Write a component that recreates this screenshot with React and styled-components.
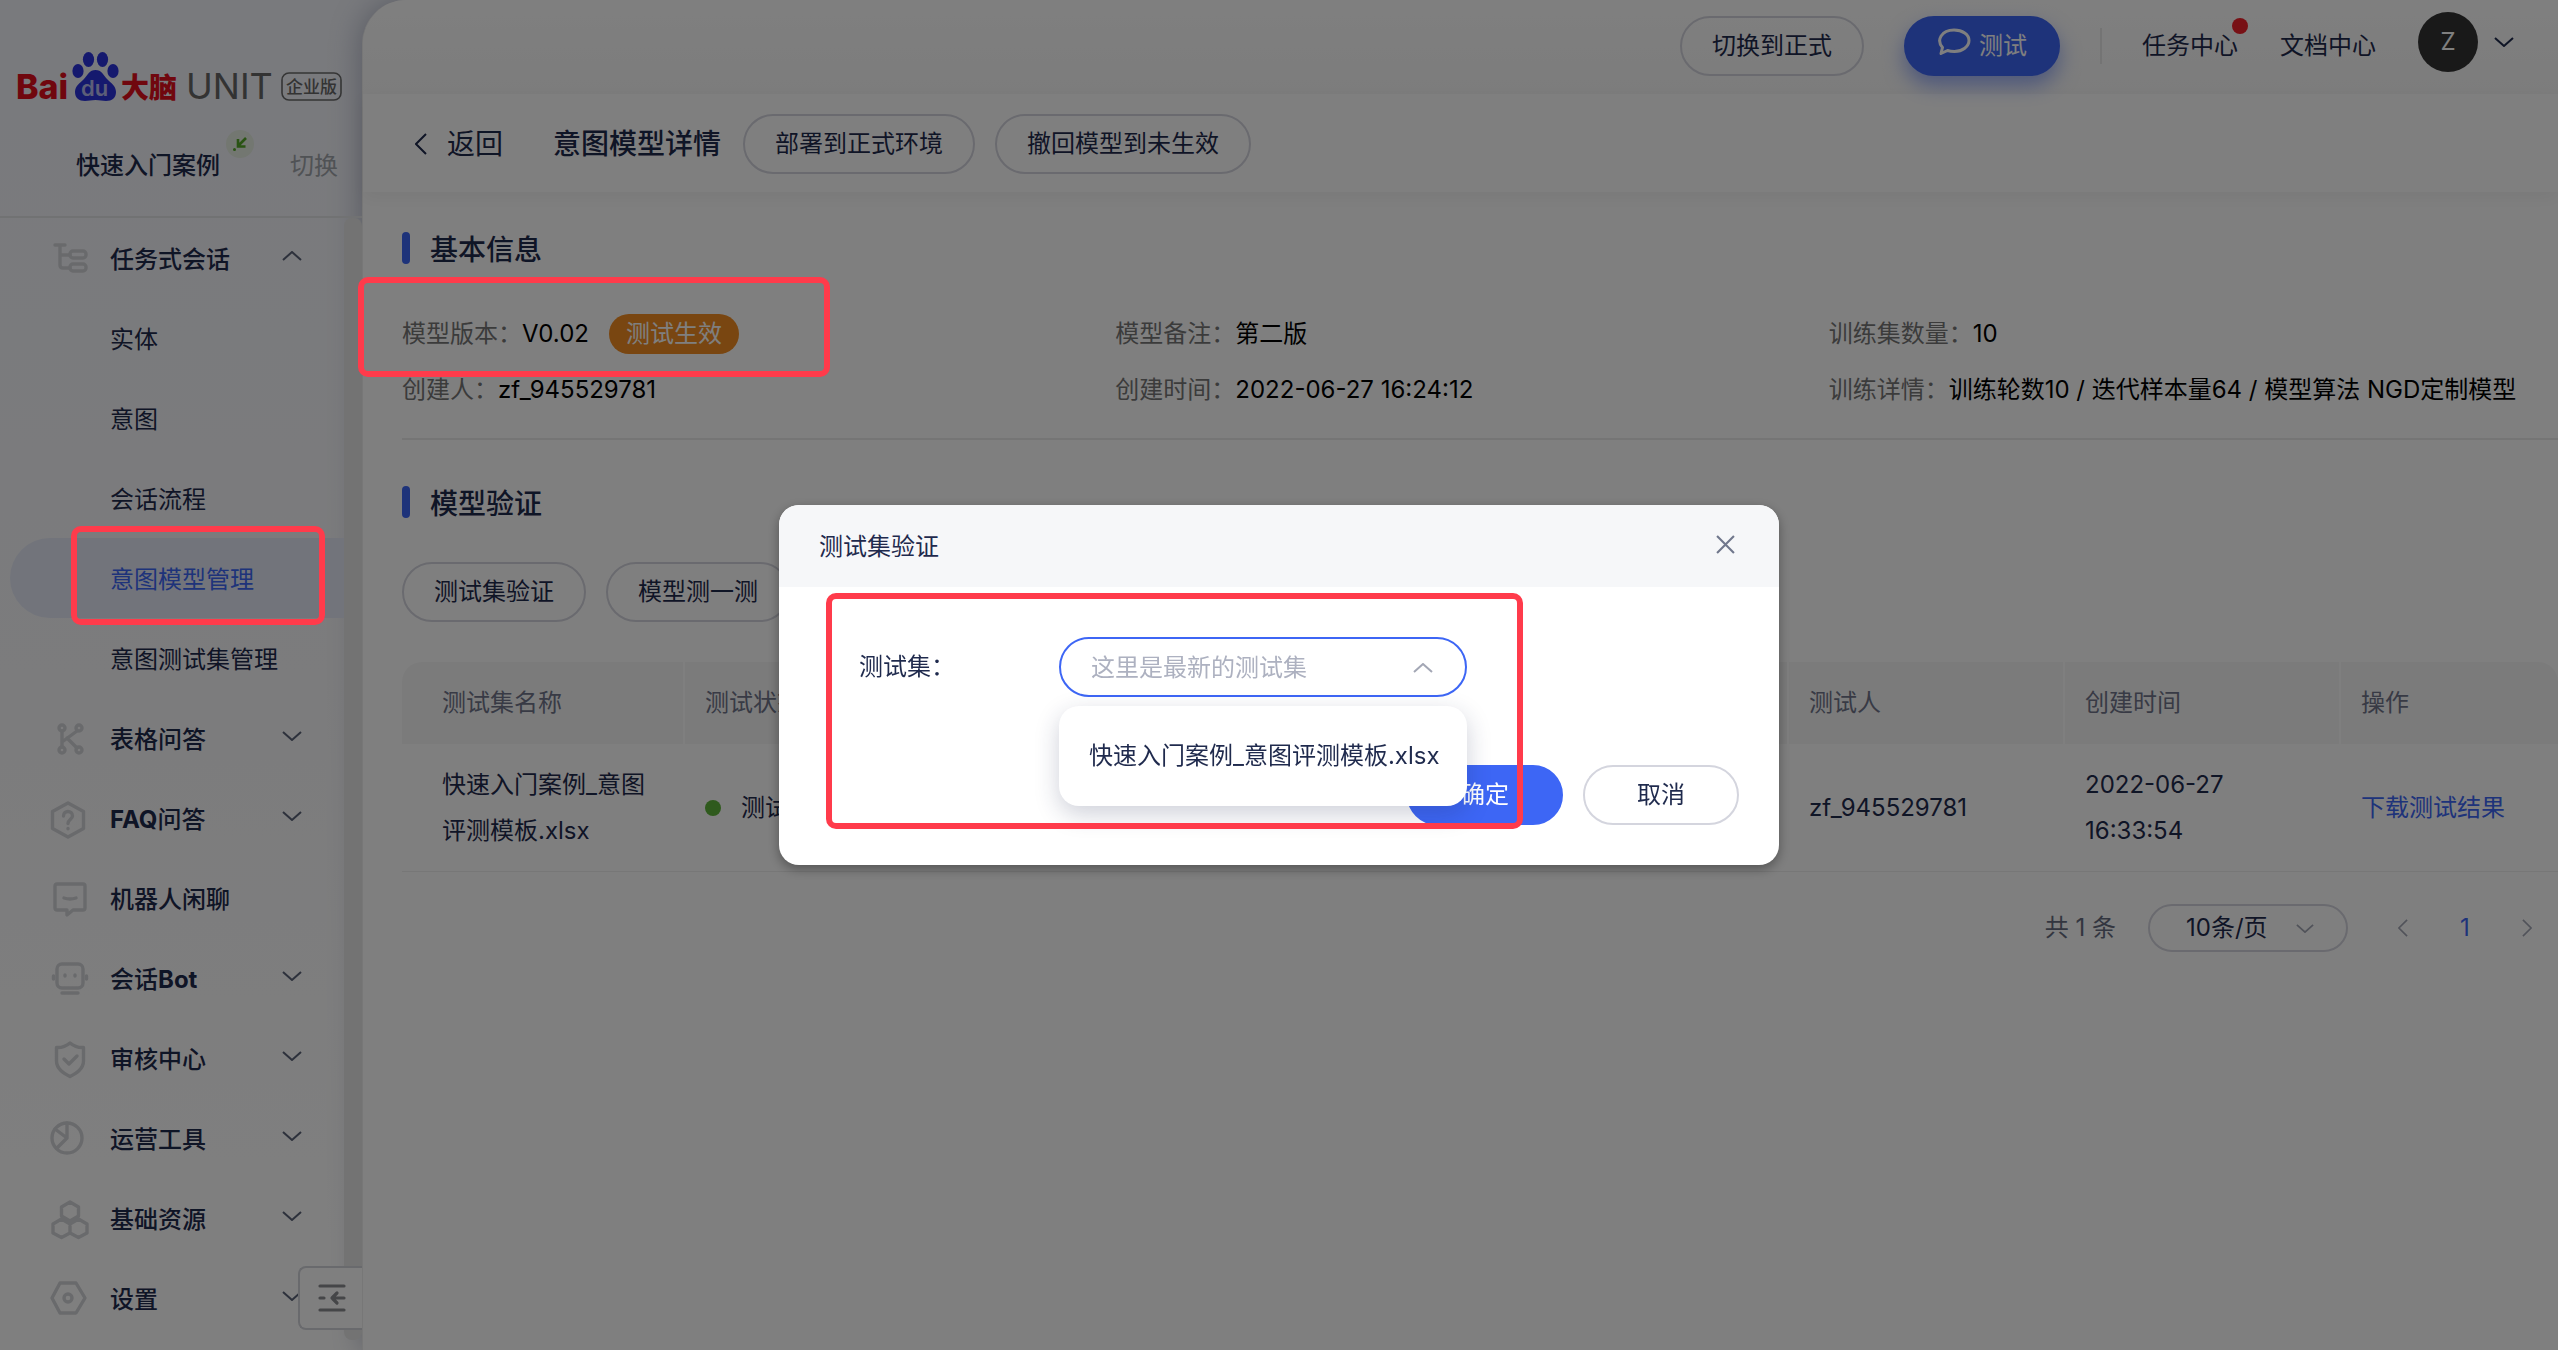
import React from 'react';
import styled, { createGlobalStyle, css } from 'styled-components';

const GlobalStyle = createGlobalStyle`
  * {
    box-sizing: border-box;
  }

  body {
    margin: 0;
    background: #fff;
    color: #1f2a4d;
    font-family: Inter, 'Noto Sans CJK SC', sans-serif;
    font-size: 24px;
    line-height: 36px;
  }

  button,
  select {
    font: inherit;
    color: inherit;
  }

  ul,
  h1,
  h2,
  dl,
  dd {
    margin: 0;
    padding: 0;
    font-weight: 400;
    list-style: none;
  }

  a {
    color: inherit;
    text-decoration: none;
  }
`;

const Page = styled.div`
  position: relative;
  display: flex;
  min-height: 100vh;
  overflow: hidden;
  background: linear-gradient(180deg, #f2f4fa 0%, #f8f8fa 50%, #fff 92%);
`;

/* ---------- sidebar ---------- */

const Sidebar = styled.aside`
  position: relative;
  flex: none;
  display: flex;
  flex-direction: column;
  width: 362px;
`;

const Brand = styled.div`
  display: flex;
  flex-direction: column;
  height: 218px;
  padding: 42px 24px 0 14px;
  border-bottom: 2px solid #e2e4e6;
`;

const ProjectRow = styled.div`
  display: flex;
  align-items: center;
  justify-content: space-between;
  margin-top: 36px;
  padding-left: 62px;
  height: 36px;
`;

const ProjectName = styled.span`
  position: relative;
  font-weight: 500;
`;

const ProjectBadge = styled.svg`
  position: absolute;
  left: 150px;
  top: -18px;
`;

const SwitchLink = styled.a`
  color: #a0a4aa;
`;

const MenuArea = styled.div`
  flex: 1;
  display: flex;
  min-height: 0;
`;

const Menu = styled.ul`
  flex: 1;
`;

const ScrollTrack = styled.div`
  flex: none;
  width: 18px;
  margin-bottom: 10px;
  border-radius: 8px;
  background: #e6e6e6;
`;

const MenuLink = styled.a`
  display: flex;
  align-items: center;
  height: 80px;
  padding: 4px 42px 0 50px;
  font-weight: 500;

  ${props => props.$sub && css`
    margin-left: 10px;
    padding: 4px 0 0 100px;
    border-radius: 40px 0 0 40px;
    font-weight: 400;
  `}

  ${props => props.$active && css`
    background: #e4e9f7;
    color: #3d66f5;
  `}
`;

const MenuIcon = styled.svg`
  flex: none;
  width: 40px;
  height: 40px;
  margin-right: 20px;
  fill: none;
  stroke: #d3d4d8;
  stroke-width: 3.4;
  stroke-linecap: round;
  stroke-linejoin: round;
`;

const Arrow = styled.svg`
  flex: none;
  width: ${props => props.$size || 20}px;
  height: ${props => (props.$size || 20) / 2}px;
  fill: none;
  stroke: ${props => props.$color || '#5b6378'};
  stroke-width: 2;
  transform: ${props => (props.$up ? 'rotate(180deg)' : 'none')};
`;

const MenuArrow = styled(Arrow)`
  margin-left: auto;
  margin-bottom: 8px;
`;

const Collapse = styled.button`
  position: absolute;
  right: 0;
  bottom: 20px;
  display: flex;
  align-items: center;
  width: 64px;
  height: 64px;
  padding: 0 0 0 18px;
  border: 2px solid #d3d4da;
  border-right: 0;
  border-radius: 8px 0 0 8px;
  background: #fff;
`;

/* ---------- main area ---------- */

const Main = styled.main`
  flex: 1;
  min-width: 0;
  border-left: 1px solid #eee;
  border-radius: 44px 0 0 0;
  background: #fff;
  box-shadow: -2px 0 30px rgba(60, 70, 110, 0.35);
`;

const TopBar = styled.header`
  display: flex;
  align-items: center;
  justify-content: flex-end;
  height: 94px;
  padding: 0 44px 2px 0;
  border-radius: 44px 0 0 0;
  background: linear-gradient(180deg, #fff, #f9f9f9);
`;

const Pill = styled.button`
  display: inline-flex;
  align-items: center;
  justify-content: center;
  height: 60px;
  padding: 0 30px;
  border: 2px solid #d4d5de;
  border-radius: 30px;
  background: transparent;
  white-space: nowrap;

  ${props => props.$primary && css`
    border-color: #3d66f5;
    background: #3d66f5;
    color: #fff;
  `}
`;

const TestPill = styled(Pill)`
  gap: 8px;
  width: 156px;
  margin-left: 40px;
  padding: 0;
  box-shadow: 0 10px 20px rgba(61, 102, 245, 0.5);
`;

const BubbleIcon = styled.svg`
  margin-bottom: 8px;
`;

const Divider = styled.span`
  width: 2px;
  height: 36px;
  margin: 0 40px;
  background: #e8e8e8;
`;

const TopLink = styled.a`
  position: relative;
  margin-right: 42px;
`;

const Dot = styled.span`
  position: absolute;
  right: -10px;
  top: -10px;
  width: 16px;
  height: 16px;
  border-radius: 50%;
  background: #f0202a;
`;

const Account = styled.button`
  display: flex;
  align-items: center;
  gap: 16px;
  padding: 0 0 8px;
  border: 0;
  background: none;
`;

const Avatar = styled.span`
  display: flex;
  align-items: center;
  justify-content: center;
  width: 60px;
  height: 60px;
  border-radius: 50%;
  background: #333;
  color: #fff;
`;

const TitleBar = styled.div`
  display: flex;
  align-items: center;
  height: 98px;
  padding: 2px 0 0 52px;
  box-shadow: 0 6px 16px rgba(0, 0, 0, 0.05);
`;

const Back = styled.a`
  display: flex;
  align-items: center;
  gap: 20px;
  font-size: 28px;
`;

const Title = styled.h1`
  margin: 0 22px 0 50px;
  font-size: 28px;
  font-weight: 500;
`;

const ButtonRow = styled.div`
  display: flex;
  gap: 20px;
`;

const Content = styled.div`
  padding: 38px 0 0 39px;
`;

const SectionTitle = styled.h2`
  display: flex;
  align-items: center;
  gap: 20px;
  height: 36px;
  padding-top: 4px;
  font-size: 28px;
  font-weight: 500;

  &::before {
    content: '';
    width: 8px;
    height: 32px;
    margin-bottom: 4px;
    border-radius: 4px;
    background: #3d66f5;
  }
`;

const InfoGrid = styled.dl`
  display: grid;
  grid-template-columns: repeat(3, minmax(0, 1fr));
  margin: 40px 0 44px;
  padding: 0 16px 20px 0;
  border-bottom: 2px solid #ebebeb;
`;

const InfoItem = styled.div`
  display: flex;
  align-items: center;
  height: 56px;
  white-space: nowrap;
`;

const InfoLabel = styled.dt`
  color: #777;
`;

const InfoValue = styled.dd`
  display: flex;
  align-items: center;
  color: #000;
`;

const Tag = styled.span`
  height: 40px;
  margin-left: 20px;
  padding: 0 17px;
  border-radius: 20px;
  background: #f28c22;
  color: #fff;
  line-height: 40px;
`;

const VerifyPanel = styled.div`
  display: flex;
  flex-direction: column;
  gap: 40px;
  padding-top: 42px;
`;

const Table = styled.table`
  width: 100%;
  border-collapse: separate;
  border-spacing: 0;
  table-layout: fixed;
`;

const Th = styled.th`
  height: 82px;
  padding: 0 20px;
  border-right: 2px solid #fff;
  background: #f7f7f7;
  color: #70758a;
  font-weight: 400;
  text-align: left;

  &:first-child {
    padding-left: 40px;
    border-radius: 20px 0 0 0;
  }

  &:last-child {
    border-right: 0;
    border-radius: 0 20px 0 0;
  }
`;

const Td = styled.td`
  height: 128px;
  padding: 0 20px;
  border-bottom: 1px solid #eee;
  line-height: 46px;

  &:first-child {
    padding-left: 40px;
  }
`;

const Status = styled.span`
  display: flex;
  align-items: center;
  gap: 20px;

  &::before {
    content: '';
    width: 16px;
    height: 16px;
    border-radius: 50%;
    background: #5fb53a;
  }
`;

const DownloadLink = styled.a`
  color: #3d66f5;
`;

const Pagination = styled.nav`
  display: flex;
  align-items: center;
  justify-content: flex-end;
  margin-top: 32px;
  padding-right: 24px;
`;

const Total = styled.span`
  margin-right: 32px;
  color: #666c80;
`;

const PageSize = styled.div`
  position: relative;
  width: 200px;
  height: 48px;
`;

const PageSizeSelect = styled.select`
  width: 100%;
  height: 100%;
  padding: 0 36px;
  border: 2px solid #d4d5de;
  border-radius: 24px;
  background: transparent;
  appearance: none;
`;

const SelectArrow = styled(Arrow)`
  position: absolute;
  right: 34px;
  top: 50%;
  margin-top: -4px;
  pointer-events: none;
`;

const PageButton = styled.button`
  display: flex;
  align-items: center;
  justify-content: center;
  width: 14px;
  height: 36px;
  padding: 0;
  border: 0;
  margin-left: 48px;
  background: none;
  color: #3d66f5;
`;

/* ---------- dialog ---------- */

const Overlay = styled.div`
  position: fixed;
  inset: 0;
  display: flex;
  align-items: flex-start;
  justify-content: center;
  padding-top: 505px;
  background: rgba(0, 0, 0, 0.5);
`;

const Dialog = styled.section`
  position: relative;
  width: 1000px;
  border-radius: 20px;
  background: #fff;
  box-shadow: 0 4px 12px rgba(0, 0, 0, 0.35);
`;

const DialogHeader = styled.header`
  display: flex;
  align-items: center;
  justify-content: space-between;
  height: 82px;
  padding: 2px 44px 0 40px;
  border-radius: 20px 20px 0 0;
  background: #f6f7f9;
`;

const CloseButton = styled.button`
  display: flex;
  padding: 0 0 6px;
  border: 0;
  background: none;
`;

const DialogBody = styled.div`
  display: flex;
  align-items: center;
  padding: 50px 80px 0;
`;

const FieldLabel = styled.label`
  width: 200px;
`;

const SelectBox = styled.div`
  position: relative;
  width: 408px;
  height: 60px;
`;

const TestSetInput = styled.input`
  width: 100%;
  height: 100%;
  padding: 0 70px 0 30px;
  border: 2px solid #3d66f5;
  border-radius: 30px;
  outline: 0;
  background: #fff;
  font: inherit;

  &::placeholder {
    color: #adb1c0;
    opacity: 1;
  }
`;

const Dropdown = styled.ul`
  position: absolute;
  z-index: 2;
  left: 0;
  top: 69px;
  width: 100%;
  padding: 20px 0;
  border-radius: 20px;
  background: #fff;
  box-shadow: 0 8px 24px rgba(30, 40, 80, 0.22);
`;

const Option = styled.li`
  height: 60px;
  padding-left: 30px;
  line-height: 60px;
  white-space: nowrap;
`;

const DialogFooter = styled.footer`
  display: flex;
  justify-content: flex-end;
  gap: 20px;
  padding: 68px 40px 40px;
`;

const FooterButton = styled(Pill)`
  width: 156px;
`;

/* red frames that point at the steps of the guide */
const Highlight = styled.span`
  position: absolute;
  z-index: 3;
  left: ${props => props.$x}px;
  top: ${props => props.$y}px;
  width: ${props => props.$w}px;
  height: ${props => props.$h}px;
  border: 6px solid #ff3b4b;
  border-radius: 10px;
  pointer-events: none;
`;

const LogoSvg = styled.svg`
  display: block;
  flex: none;
  font-family: Inter, 'Noto Sans CJK SC', sans-serif;
`;

const Logo = () => (
  <LogoSvg width="332" height="70" viewBox="-4 -10 332 70" role="img" aria-label="Baidu大脑 UNIT 企业版">
    <text x="-2" y="47" fontSize="34" fontWeight="800" fill="#e10f1c">Bai</text>
    <g fill="#2b32dc">
      <ellipse cx="60" cy="19" rx="5.6" ry="7" />
      <ellipse cx="70.5" cy="7.5" rx="5.6" ry="7.5" />
      <ellipse cx="84.5" cy="7.5" rx="5.6" ry="7.5" />
      <ellipse cx="95" cy="19" rx="5.6" ry="7" />
      <path d="M77.5 18c-6 0-8 5-11.500 9-4 4-9 7-9 13 0 6 4 9 10 9 4 0 6-1 10.500-1s6.500 1 10.500 1c6 0 10-3 10-9 0-6-5-9-9-13-3.500-4-5.500-9-11.500-9z" />
    </g>
    <text x="63" y="44" fontSize="22" fontWeight="600" fill="#b9bcf0">du</text>
    <text x="103" y="46" fontSize="28" fontWeight="900" fill="#e10f1c">大脑</text>
    <text x="168" y="47" fontSize="36" fill="#666">UNIT</text>
    <rect x="264" y="21" width="59" height="27" rx="7" fill="none" stroke="#6a6a6a" strokeWidth="1.6" />
    <text x="268" y="41" fontSize="17" fontWeight="500" fill="#666">企业版</text>
  </LogoSvg>
);

const icons = {
  tree: (
    <>
      <path d="M5 5h10M10 5v20q0 3 3 3h7M10 15h10" />
      <rect x="20" y="11" width="16" height="7" rx="3" />
      <rect x="20" y="24" width="16" height="7" rx="3" />
    </>
  ),
  graph: (
    <>
      <path d="M12 11v16M27 11L12 22M17 18l10 10" />
      <circle cx="12" cy="8" r="3" />
      <circle cx="29" cy="8" r="3" />
      <circle cx="12" cy="30" r="3" />
      <circle cx="29" cy="30" r="3" />
    </>
  ),
  faq: (
    <>
      <path d="M18 3l15.500 8.500v17L18 37 2.500 28.500v-17z" />
      <path d="M13.500 16c0-6 9-6 9 0 0 3-4.500 3.500-4.500 7.500M18 28.500v.3" />
    </>
  ),
  chat: (
    <>
      <path d="M7 4h26q2 0 2 2v22q0 2-2 2H23l-6 5v-5H7q-2 0-2-2V6q0-2 2-2z" />
      <path d="M14 18q6 2 12 0" />
    </>
  ),
  bot: (
    <>
      <rect x="7" y="4" width="26" height="24" rx="5" />
      <path d="M3.500 16v3M36.500 16v3M15 15v1M25 15v1M12 33h16" />
    </>
  ),
  shield: (
    <>
      <path d="M20 3q6 5 13.500 4.500V21c0 8-7 12-13.500 15.500C13.500 33 6.500 29 6.500 21V7.500Q14 8 20 3z" />
      <path d="M14 19l5 5 8-8" />
    </>
  ),
  pie: (
    <>
      <circle cx="17" cy="18" r="15" />
      <path d="M17 3v15L7 28M17 18L5 9" />
    </>
  ),
  resource: (
    <path d="M20 2l8.500 5v9L20 21l-8.500-5V7zM11.500 19l8.500 5v9l-8.500 4.500L3 33v-9zM28.500 19l8.500 5v9l-8.500 4.500L20 33v-9z" />
  ),
  settings: (
    <>
      <path d="M10 3h16l9 15-9 15H10L2 18z" />
      <circle cx="18" cy="18" r="4" />
    </>
  ),
};

const menuItems = [
  { key: 'task', label: '任务式会话', icon: 'tree', open: true },
  { key: 'entity', label: '实体', sub: true },
  { key: 'intent', label: '意图', sub: true },
  { key: 'flow', label: '会话流程', sub: true },
  { key: 'model', label: '意图模型管理', sub: true, active: true },
  { key: 'testset', label: '意图测试集管理', sub: true },
  { key: 'table', label: '表格问答', icon: 'graph', arrow: true },
  { key: 'faq', label: <span><b>FAQ</b>问答</span>, icon: 'faq', arrow: true },
  { key: 'chat', label: '机器人闲聊', icon: 'chat' },
  { key: 'bot', label: <span>会话<b>Bot</b></span>, icon: 'bot', arrow: true },
  { key: 'audit', label: '审核中心', icon: 'shield', arrow: true },
  { key: 'ops', label: '运营工具', icon: 'pie', arrow: true },
  { key: 'resource', label: '基础资源', icon: 'resource', arrow: true },
  { key: 'settings', label: '设置', icon: 'settings', arrow: true },
];

const columns = [
  { title: '测试集名称', width: '283px' },
  { title: '测试状态' },
  { title: '准确率' },
  { title: '召回率' },
  { title: '测试人', width: '276px' },
  { title: '创建时间', width: '276px' },
  { title: '操作', width: '217px' },
];

const chevronPath = <path d="M1 1l9 8 9-8" />;

const SideChevron = ({ right, color = '#1f2a4d', size = 22 }) => (
  <svg width={size / 2 + 1} height={size} viewBox="0 0 12 22" fill="none" stroke={color} strokeWidth="2" aria-hidden="true">
    <path d={right ? 'M1 1l10 10L1 21' : 'M11 1L1 11l10 10'} />
  </svg>
);

const SidebarMenu = () => (
  <Menu>
    {menuItems.map(item => (
      <li key={item.key}>
        <MenuLink href="#" $sub={item.sub} $active={item.active}>
          {item.icon && <MenuIcon viewBox="0 0 40 40">{icons[item.icon]}</MenuIcon>}
          {item.label}
          {(item.open || item.arrow) && (
            <MenuArrow viewBox="0 0 20 10" $up={item.open}>{chevronPath}</MenuArrow>
          )}
        </MenuLink>
      </li>
    ))}
  </Menu>
);

const Info = ({ label, children }) => (
  <InfoItem>
    <InfoLabel>{label}：</InfoLabel>
    <InfoValue>{children}</InfoValue>
  </InfoItem>
);

const ResultTable = () => (
  <Table>
    <colgroup>
      {columns.map(col => <col key={col.title} width={col.width} />)}
    </colgroup>
    <thead>
      <tr>
        {columns.map(col => <Th key={col.title}>{col.title}</Th>)}
      </tr>
    </thead>
    <tbody>
      <tr>
        <Td>快速入门案例_意图评测模板.xlsx</Td>
        <Td><Status>测试完成</Status></Td>
        <Td />
        <Td />
        <Td>zf_945529781</Td>
        <Td>2022-06-27 16:33:54</Td>
        <Td><DownloadLink href="#">下载测试结果</DownloadLink></Td>
      </tr>
    </tbody>
  </Table>
);

const VerifyDialog = () => (
  <Overlay>
    <Dialog role="dialog" aria-labelledby="dialog-title">
      <DialogHeader>
        <span id="dialog-title">测试集验证</span>
        <CloseButton aria-label="关闭">
          <svg width="19" height="19" viewBox="0 0 18 18" fill="none" stroke="#70778c" strokeWidth="2">
            <path d="M1 1l16 16M17 1L1 17" />
          </svg>
        </CloseButton>
      </DialogHeader>
      <DialogBody>
        <FieldLabel htmlFor="test-set">测试集：</FieldLabel>
        <SelectBox>
          <TestSetInput id="test-set" placeholder="这里是最新的测试集" readOnly />
          <SelectArrow viewBox="0 0 20 10" $up $color="#a3a7b5">{chevronPath}</SelectArrow>
          <Dropdown>
            <Option>快速入门案例_意图评测模板.xlsx</Option>
          </Dropdown>
        </SelectBox>
      </DialogBody>
      <DialogFooter>
        <FooterButton $primary>确定</FooterButton>
        <FooterButton>取消</FooterButton>
      </DialogFooter>
      <Highlight $x={47} $y={88} $w={697} $h={236} />
    </Dialog>
  </Overlay>
);

const App = () => (
  <>
    <GlobalStyle />
    <Page>
      <Sidebar>
        <Brand>
          <Logo />
          <ProjectRow>
            <ProjectName>
              快速入门案例
              <ProjectBadge width="28" height="28" viewBox="0 0 28 28" fill="none" stroke="#55a828" strokeWidth="2.6">
                <circle cx="14" cy="14" r="14" fill="#e6eee2" stroke="none" />
                <path d="M20 8l-8 8M12 9v7.500h7.500" />
                <circle cx="8.5" cy="19.5" r="1.5" fill="#55a828" stroke="none" />
              </ProjectBadge>
            </ProjectName>
            <SwitchLink href="#">切换</SwitchLink>
          </ProjectRow>
        </Brand>
        <MenuArea>
          <SidebarMenu />
          <ScrollTrack />
        </MenuArea>
        <Collapse aria-label="收起菜单">
          <svg width="28" height="28" viewBox="0 0 28 28" fill="none" stroke="#8b8c90" strokeWidth="3.2" strokeLinecap="round" strokeLinejoin="round">
            <path d="M2 2h24M2 26h24M2 14h4M14 14h12M19 9l-5 5 5 5" />
          </svg>
        </Collapse>
      </Sidebar>

      <Main>
        <TopBar>
          <Pill>切换到正式</Pill>
          <TestPill $primary>
            <BubbleIcon width="34" height="28" viewBox="0 0 34 28" fill="none" stroke="#fff" strokeWidth="3" strokeLinejoin="round">
              <path d="M4 25.500L5.500 19.500C-1 12 4.500 2 17 2c8.500 0 15 4.500 15 10.500S25.500 23.500 17.500 23.500c-3 0-5-.3-7-1z" />
            </BubbleIcon>
            测试
          </TestPill>
          <Divider />
          <TopLink href="#">
            任务中心
            <Dot />
          </TopLink>
          <TopLink href="#">文档中心</TopLink>
          <Account aria-label="账号">
            <Avatar>Z</Avatar>
            <Arrow viewBox="0 0 20 10" $color="#1f2a4d">{chevronPath}</Arrow>
          </Account>
        </TopBar>
        <TitleBar>
          <Back href="#">
            <SideChevron />
            返回
          </Back>
          <Title>意图模型详情</Title>
          <ButtonRow>
            <Pill>部署到正式环境</Pill>
            <Pill>撤回模型到未生效</Pill>
          </ButtonRow>
        </TitleBar>
        <Content>
          <SectionTitle>基本信息</SectionTitle>
          <InfoGrid>
            <Info label="模型版本">
              V0.02
              <Tag>测试生效</Tag>
            </Info>
            <Info label="模型备注">第二版</Info>
            <Info label="训练集数量">10</Info>
            <Info label="创建人">zf_945529781</Info>
            <Info label="创建时间">2022-06-27 16:24:12</Info>
            <Info label="训练详情">训练轮数10 / 迭代样本量64 / 模型算法 NGD定制模型</Info>
          </InfoGrid>
          <SectionTitle>模型验证</SectionTitle>
          <VerifyPanel>
            <ButtonRow>
              <Pill>测试集验证</Pill>
              <Pill>模型测一测</Pill>
            </ButtonRow>
            <ResultTable />
          </VerifyPanel>
          <Pagination>
            <Total>共 1 条</Total>
            <PageSize>
              <PageSizeSelect aria-label="每页条数" defaultValue="10">
                <option value="10">10条/页</option>
              </PageSizeSelect>
              <SelectArrow viewBox="0 0 20 10" $size={18} $color="#a3a7b5">{chevronPath}</SelectArrow>
            </PageSize>
            <PageButton aria-label="上一页"><SideChevron color="#a3a7b5" size={18} /></PageButton>
            <PageButton>1</PageButton>
            <PageButton aria-label="下一页"><SideChevron right color="#a3a7b5" size={18} /></PageButton>
          </Pagination>
        </Content>
      </Main>
    </Page>

    <VerifyDialog />
    <Highlight $x={358} $y={277} $w={472} $h={100} />
    <Highlight $x={71} $y={526} $w={254} $h={99} />
  </>
);

export default App;
